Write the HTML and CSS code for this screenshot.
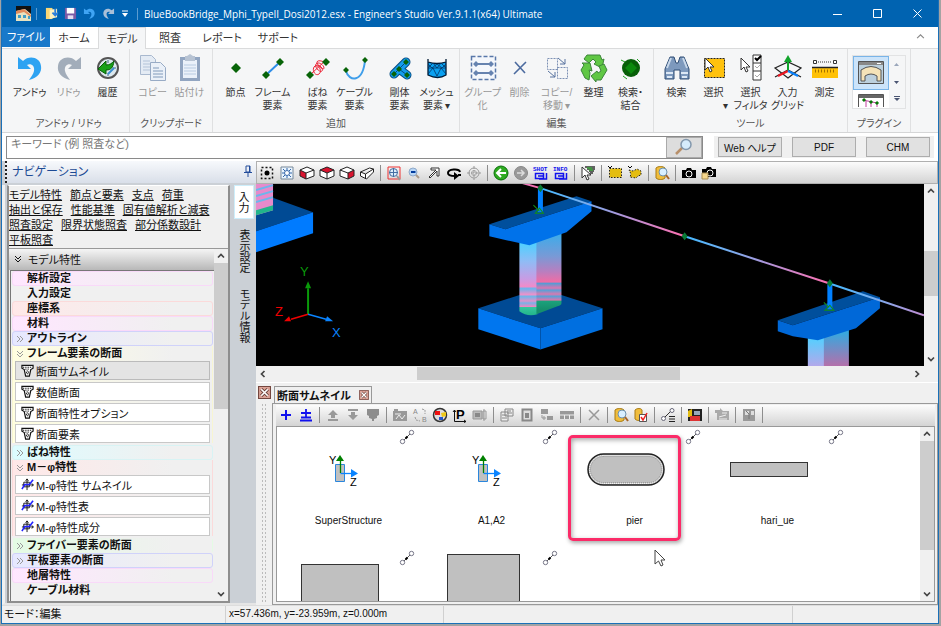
FILE: index.html
```
<!DOCTYPE html>
<html lang="ja">
<head>
    <meta charset="UTF-8">
    <meta name="viewport" content="width=device-width, initial-scale=1.0">
    <title>Engineer's Studio</title>
    <link rel="stylesheet" href="styles.css">
</head>
<body>
<!-- Shared icons -->
<svg class="sprite" aria-hidden="true">
    <symbol id="i-link" viewBox="0 0 16 16"><path d="M5 11l6-6" stroke="#555"/><path d="M6.500 9.500l2-2" stroke="#000" stroke-width="2"/><circle cx="3.500" cy="12.500" r="2.200" fill="#fff" stroke="#778"/><circle cx="12.500" cy="3.500" r="2.200" fill="#fff" stroke="#778"/></symbol>
    <symbol id="i-section" viewBox="0 0 14 14"><path d="M1 1.500h12v3l-2.500 1.500-1.500 7H5L3.500 6 1 4.500z" fill="#fff" stroke="#111" stroke-width="1.300"/><path d="M2 3.500h10M4.500 5.500h5M6 7.500h2v3H6z" stroke="#111" stroke-dasharray="1.500 1" fill="none"/></symbol>
    <symbol id="i-mphi" viewBox="0 0 14 14"><path d="M3 4.500h6v5H3zM1 7.500h12M6.500 1v12M5 3l1.500-2L8 3M11.500 6l2 1.500-2 1.500" stroke="#111" fill="none"/><path d="M1 12l3-5h5l4-5" stroke="#22f" stroke-width="1.700" fill="none"/></symbol>
    <symbol id="i-up" viewBox="0 0 8 8"><path d="M1 5.500l3-3 3 3" fill="none" stroke="#444" stroke-width="1.700"/></symbol>
    <symbol id="i-down" viewBox="0 0 8 8"><path d="M1 2.500l3 3 3-3" fill="none" stroke="#444" stroke-width="1.700"/></symbol>
    <symbol id="i-left" viewBox="0 0 8 8"><path d="M5.500 1l-3 3 3 3" fill="none" stroke="#444" stroke-width="1.700"/></symbol>
    <symbol id="i-right" viewBox="0 0 8 8"><path d="M2.500 1l3 3-3 3" fill="none" stroke="#444" stroke-width="1.700"/></symbol>
    <symbol id="i-more" viewBox="0 0 8 8"><path d="M1 1l3 3-3 3M4 1l3 3-3 3" fill="none" stroke="#999"/></symbol>
    <symbol id="i-open" viewBox="0 0 8 8"><path d="M1 1l3 3 3-3M1 4l3 3 3-3" fill="none" stroke="currentColor"/></symbol>
    <symbol id="i-undo" viewBox="0 0 28 28"><path d="M2 3v12h13l-4-4c4-2 8 1 7 6-.5 3-3 6-5 9 9-2 13-8 12-14C24 3 13 1 7 7z" fill="currentColor"/></symbol>
    <symbol id="i-x" viewBox="0 0 12 12"><path d="M.5.5h11v11H.5z" fill="#dca397" stroke="#74463e"/><path d="M3 3l6 6M9 3L3 9" stroke="#6b4038" stroke-width="3"/><path d="M3 3l6 6M9 3L3 9" stroke="#fff" stroke-width="1.500"/></symbol>
    <symbol id="i-axes" viewBox="0 0 32 36"><path d="M7.500 12.500h9v17h-9z" fill="#c0c0c0" stroke="#2a86dd"/><path d="M12.500 21.500h12" stroke="#0a84ff" stroke-width="1.300"/><path d="M23 17l7 4.500-7 4z" fill="#0a84ff"/><path d="M12.500 21V7" stroke="#008000" stroke-width="1.300"/><path d="M8 9l4-6 4 6z" fill="#008000"/></symbol>
    <symbol id="i-search" viewBox="0 0 16 16"><path d="M2 3c2-2 7-2 9 0v10c-2 2-7 2-9 0z" fill="#f0bd3c" stroke="#a87b12"/><circle cx="9" cy="7" r="4" fill="#d8efff" stroke="#6d91ad"/><path d="M12 10l3 4" stroke="#a6652a" stroke-width="2"/></symbol>
</svg>

<div class="window">
    <header class="titlebar">
        <svg class="app-icon" viewBox="0 0 15 15"><path d="M0 0h15v15H0z" fill="#e7e2c0"/><path d="M0 0h15v8L9 3 0 5z" fill="#111"/><path d="M0 5l8-2 7 6v2L8 6 0 8z" fill="#e18a5b"/><path d="M2 9h3v3H2zM7 9h3v3H7zM12 10h2v3h-2z" fill="#3f9dc5"/></svg>
        <i class="bar"></i>
        <button aria-label="開く"><svg viewBox="0 0 14 14"><path d="M1 1h7v12H1z" fill="#f9d675"/><path d="M5 3l8-1v9l-8 2z" fill="#fff3c0"/><path d="M11 2v7M8 6l3 3 3-3" stroke="#2b7fdb" stroke-width="2" fill="none"/></svg></button>
        <button aria-label="保存"><svg viewBox="0 0 14 14"><path d="M1 1h12v12H1z" fill="#7a5aa6"/><path d="M3 1h8v6H3z" fill="#fff"/><path d="M4 9h6v4H4z" fill="#e5dcf0"/></svg></button>
        <button class="undo" aria-label="元に戻す"><svg viewBox="0 0 28 28"><use href="#i-undo"/></svg></button>
        <button class="redo" aria-label="やり直し"><svg viewBox="0 0 28 28"><g transform="matrix(-1 0 0 1 28 0)"><use href="#i-undo"/></g></svg></button>
        <button class="small" aria-label="カスタマイズ"><svg viewBox="0 0 8 8"><path d="M1 1h6" stroke="#fff"/><path d="M1 3h6L4 7z" fill="#fff"/></svg></button>
        <i class="bar last-bar"></i>
        <h1>BlueBookBridge_Mphi_TypeII_Dosi2012.esx - Engineer's Studio Ver.9.1.1(x64) Ultimate</h1>
        <div class="window-buttons">
            <button aria-label="最小化"><svg viewBox="0 0 10 10"><path d="M0 5.500h9" stroke="#fff"/></svg></button>
            <button aria-label="最大化"><svg viewBox="0 0 10 10"><path d="M.5.5h8v8h-8z" fill="none" stroke="#fff"/></svg></button>
            <button aria-label="閉じる"><svg viewBox="0 0 10 10"><path d="M.5.5l8 8M8.500.5l-8 8" stroke="#fff"/></svg></button>
        </div>
    </header>

    <nav class="tabs">
        <button class="file">ファイル</button>
        <button>ホーム</button>
        <button class="active">モデル</button>
        <button>照査</button>
        <button class="wide">レポート</button>
        <button class="wide">サポート</button>
        <button class="collapse" aria-label="リボンを閉じる"><svg viewBox="0 0 8 8"><path d="M1 5.500l3-3 3 3" fill="none" stroke="#888"/></svg></button>
    </nav>

    <section class="ribbon">
        <div class="group roomy">
            <div class="tools">
                <button class="tool"><svg class="blue" viewBox="0 0 28 28"><use href="#i-undo"/></svg>アンドゥ</button>
                <button class="tool off"><svg class="gray" viewBox="0 0 28 28"><g transform="matrix(-1 0 0 1 28 0)"><use href="#i-undo"/></g></svg>リドゥ</button>
                <button class="tool"><svg viewBox="0 0 28 28"><circle cx="14" cy="14" r="10" fill="#dce8ee" stroke="#555" stroke-width="2"/><path d="M14 6v3M22 14h-3M14 22v-3M14 14l5-6" stroke="#468"/><path d="M4 15l8-8v4c4 0 6-2 8-4-1 7-3 9-8 9v4z" fill="#18a018" stroke="#075c07"/><path d="M14 20l6-6" stroke="#3a8dd0" stroke-width="2"/></svg>履歴</button>
            </div>
            <div class="caption">アンドゥ / リドゥ</div>
        </div>
        <div class="group">
            <div class="tools">
                <button class="tool off"><svg viewBox="0 0 28 28"><path d="M1.500 1.500h11l4 4v15h-15z" fill="#e4ebf4" stroke="#a9b9cf"/><path d="M4 7h7M4 10h9M4 13h9M4 16h9" stroke="#b3c3d8"/><path d="M11.500 8.500h10l5 5v13h-15z" fill="#eaf0f8" stroke="#98abc5"/><path d="M14 14h6M14 17h10M14 20h10M14 23h10" stroke="#a4b6ce" stroke-width="1.500"/></svg>コピー</button>
                <button class="tool off"><svg viewBox="0 0 28 28"><path d="M4 3h20v24H4z" fill="#91a5c1"/><path d="M7 6h14v18H7z" fill="#eaf1fa"/><path d="M9 2h2l3-2 3 2h2v5H9z" fill="#b7c3d3"/><path d="M8 11h12M8 14h12M8 17h12M8 20h12" stroke="#b8cbe2"/></svg>貼付け</button>
            </div>
            <div class="caption">クリップボード</div>
        </div>
        <div class="group">
            <div class="tools">
                <button class="tool"><svg viewBox="0 0 28 28"><path d="M14 9l5 5-5 5-5-5z" fill="#086408"/></svg>節点</button>
                <button class="tool"><svg viewBox="0 0 28 28"><path d="M7 21L21 8" stroke="#2e8de8" stroke-width="2"/><path d="M7 17l4 4-4 4-4-4zM21 4l4 4-4 4-4-4z" fill="#086408"/></svg>フレーム<br>要素</button>
                <button class="tool spaced"><svg viewBox="0 0 28 28"><path d="M7 20L21 7M10 13c4-4 9 4 5 7s-8-5-4-8 9 3 7 5-8-4-6-7 8 1 8 4-6-2-7-5 5-3 8 0" stroke="#ed2436" fill="none"/><path d="M6 17l4 4-4 4-4-4zM22 4l4 4-4 4-4-4z" fill="#086408"/></svg>ばね<br>要素</button>
                <button class="tool"><svg viewBox="0 0 28 28"><path d="M5 17c3 11 17 12 19-11" stroke="#3f9eea" stroke-width="2" fill="none"/><path d="M5 13l3 3-3 3-3-3zM24 3l3 3-3 3-3-3z" fill="#086408"/></svg>ケーブル<br>要素</button>
                <button class="tool spaced"><svg viewBox="0 0 28 28"><g stroke-linecap="round"><path d="M8 20L20 8M13 15l8 6" stroke="#064b80" stroke-width="9"/><path d="M8 20L20 8M13 15l8 6" stroke="#149ceb" stroke-width="7"/></g><path d="M8 20L20 8M13 15l8 6" stroke="#064b80"/><path d="M8 17l3 3-3 3-3-3zM20 5l3 3-3 3-3-3zM21 18l3 3-3 3-3-3zM13 12l3 3-3 3-3-3z" fill="#086408"/></svg>剛体<br>要素</button>
                <button class="tool"><svg viewBox="0 0 28 28"><path d="M5 5v16q10 5 18 0V5v3q-9 3-18 0z" fill="#0aa0f0" stroke="#001a35" stroke-width="1.300"/><path d="M5 14l5-5 4 5 4-5 5 5M5 20l5-6 4 8 4-8 5 6M5 14h18M5 10l4 4 5-4 5 4 4-4" stroke="#036" stroke-width=".8" fill="none"/></svg>メッシュ<br>要素<span class="drop">▾</span></button>
            </div>
            <div class="caption">追加</div>
        </div>
        <div class="group">
            <div class="tools">
                <button class="tool off"><svg viewBox="0 0 28 28"><path d="M2.500 2.500h24v23h-24z" fill="#f4f7fc" stroke="#5877a9" stroke-width="1.500" stroke-dasharray="4 2"/><path d="M6 10h17M6 19h17" stroke="#6683b0" stroke-width="2"/><path d="M7 7l3 3-3 3-3-3zM22 7l3 3-3 3-3-3zM7 16l3 3-3 3-3-3zM22 16l3 3-3 3-3-3z" fill="#6683b0"/></svg>グループ<br>化</button>
                <button class="tool off"><svg viewBox="0 0 28 28"><path d="M9 8l10 11M20 8L8 20" stroke="#4c6b9f" stroke-width="1.600"/></svg>削除</button>
                <button class="tool off"><svg viewBox="0 0 28 28"><path d="M4.500 4.500h10v11h-10zM14.500 13.500h10v11h-10z" fill="none" stroke="#7c91b4" stroke-dasharray="2 1"/><path d="M15 4l7 6M5 17l7 6M22 5v5h-5M12 18v5H7" stroke="#58739f" fill="none"/></svg>コピー/<br>移動<span class="drop">▾</span></button>
                <button class="tool"><svg viewBox="0 0 28 28"><g fill="#60c744" stroke="#3c853a"><path d="M7 1h13l2 5 2-1-2 9-8-4 2-2-3-3-4 4-5-4z"/><path d="M24 10l3 6-6 10h-5v2l-5-6 6-5 1 2 3-2-2-5z"/><path d="M2 9l8 0 2 8-3-1 1 3-1 7-4-2-4-8 3-5z"/></g></svg>整理</button>
                <button class="tool"><svg viewBox="0 0 28 28"><circle cx="14" cy="14" r="9" fill="#075f08"/><path d="M14 8l6 6-6 6-6-6z" fill="#0b8a0d"/><path d="M4 6l4 2M6 22l4 3M20 5l3 3" stroke="#1da21d"/></svg>検索・<br>結合</button>
            </div>
            <div class="caption">編集</div>
        </div>
        <div class="group">
            <div class="tools">
                <button class="tool"><svg viewBox="0 0 28 28"><path d="M7 3h4l2 6h2l2-6h4l5 12v10h-9v-9h-6v9H2V15z" fill="#7d99bd" stroke="#2e4d75"/><path d="M3 19h7M18 19h7M4 23h5M19 23h5" stroke="#dce8f5" stroke-width="2"/><path d="M8 4l-4 10M20 4l4 10" stroke="#c8d8ea" stroke-width="2"/></svg>検索</button>
                <button class="tool"><svg viewBox="0 0 28 28"><path d="M4.500 4.500h20v19h-20z" fill="#ffc20e" stroke="#222" stroke-dasharray="2 1"/><path d="M5 4v12l3-3 2 5 2-1-2-4h4z" fill="#fff" stroke="#333"/></svg>選択<br><span class="drop right">▾</span></button>
                <button class="tool"><svg viewBox="0 0 28 28"><path d="M4 4v12l3-3 2 5 2-1-2-4h4z" fill="#fff" stroke="#333"/><path d="M16 1h8v25h-8zM16 9h8M16 17h8" fill="#fff" stroke="#333"/><path d="M18 4l2 2 4-4" fill="none" stroke="#000" stroke-width="2"/><path d="M18 12l2 2 3-3M18 21l2 2 3-3" fill="none" stroke="#aaa"/></svg>選択<br>フィルタ</button>
                <button class="tool"><svg viewBox="0 0 28 28"><path d="M1 14l13-6 13 6-13 10zM1 23l13-7 13 7" fill="none" stroke="#222" stroke-width="1.200"/><path d="M14 17V5" stroke="#11a42b" stroke-width="2"/><path d="M10 8l4-7 4 7z" fill="#11a42b"/><path d="M14 17L4 22" stroke="#f01622" stroke-width="2"/><path d="M14 17l10 5" stroke="#0a84ff" stroke-width="2"/></svg>入力<br>グリッド</button>
                <button class="tool"><svg viewBox="0 0 28 28"><path d="M2.500 6.500h3v3h-3zM22.500 6.500h3v3h-3z" fill="#fff" stroke="#333"/><path d="M7 8h14" stroke="#333" stroke-dasharray="1 1"/><path d="M1 14h26v10H1z" fill="#ffc107"/><path d="M1 13.500h26" stroke="#222" stroke-width="1.500"/><path d="M4 17h20" stroke="#a37100" stroke-width="3" stroke-dasharray="1 2"/></svg>測定</button>
            </div>
            <div class="caption">ツール</div>
        </div>
        <div class="group">
            <div class="gallery">
                <div class="gallery-list">
                    <button class="picked" aria-label="プラグイン 1"><svg viewBox="0 0 28 28"><path d="M1.500 2.500h25v22h-25z" fill="#bcd0dd" stroke="#555"/><path d="M2 3h24v3H2z" fill="#888"/><path d="M20 4.500h4" stroke="#fff"/><path d="M4 11q10-7 20 0v11h-4v-5q-6-4-12 0v5H4z" fill="#f5e3b8" stroke="#555"/></svg></button>
                    <button aria-label="プラグイン 2"><svg viewBox="0 0 28 14"><path d="M1.500 1.500h25v14h-25z" fill="#fff" stroke="#555"/><path d="M2 2h24v3H2z" fill="#666"/><path d="M6 7l14 3v4M9 8v6M14 9v5" stroke="#c03e9e" fill="none"/><path d="M6 6l2 2M13 8l2 2M19 9l2 2" stroke="#087808" stroke-width="3"/></svg></button>
                </div>
                <div class="gallery-nav">
                    <button aria-label="上"><svg viewBox="0 0 6 6"><path d="M0 4h5L2.500 1z" fill="#9aa7bb"/></svg></button>
                    <button aria-label="下"><svg viewBox="0 0 6 6"><path d="M0 2h5L2.500 5z" fill="#4a5572"/></svg></button>
                    <button aria-label="一覧"><svg viewBox="0 0 6 6"><path d="M0 .5h6" stroke="#4a5572"/><path d="M0 2h6L3 5z" fill="#4a5572"/></svg></button>
                </div>
            </div>
            <div class="caption">プラグイン</div>
        </div>
    </section>

    <form class="searchbar">
        <div class="search-box">
            <input type="text" aria-label="キーワード" placeholder="キーワード (例 照査など)">
            <button type="button" aria-label="検索"><svg viewBox="0 0 20 18"><path d="M2 16l7-7" stroke="#b8906b" stroke-width="2.500"/><circle cx="12" cy="6.500" r="5" fill="#d5ebfb" stroke="#8398ad" stroke-width="1.500"/></svg></button>
        </div>
        <div class="help">
            <button type="button">Web ヘルプ</button>
            <button type="button">PDF</button>
            <button type="button">CHM</button>
        </div>
    </form>

    <main class="main">
        <aside class="side">
            <div class="side-title"><span>ナビゲーション</span><button aria-label="固定"><svg viewBox="0 0 10 12"><path d="M3 1h4v6H3zM1 7.500h8M5 8v4" fill="none" stroke="#224c9b"/><path d="M6.500 1v6" stroke="#224c9b"/></svg></button></div>
            <div class="side-body">
                <div class="nav-panel">
                    <div class="links">
                        <p><a href="#">モデル特性</a><a href="#">節点と要素</a><a href="#">支点</a><a href="#">荷重</a></p>
                        <p><a href="#">抽出と保存</a><a href="#">性能基準</a><a href="#">固有値解析と減衰</a></p>
                        <p><a href="#">照査設定</a><a href="#">限界状態照査</a><a href="#">部分係数設計</a></p>
                        <p><a href="#">平板照査</a></p>
                    </div>
                    <div class="tree">
                        <div class="tree-main">
                            <button class="tree-head"><svg viewBox="0 0 8 8"><use href="#i-open"/></svg>モデル特性</button>
                            <div class="tree-list">
                                <button class="row pink">解析設定</button>
                                <button class="row plain">入力設定</button>
                                <button class="row red">座標系</button>
                                <button class="row pink">材料</button>
                                <button class="row blue"><svg viewBox="0 0 8 8"><use href="#i-more"/></svg>アウトライン</button>
                                <div class="branch yellow">
                                    <button class="row"><svg viewBox="0 0 8 8"><use href="#i-open"/></svg>フレーム要素の断面</button>
                                    <button class="leaf current"><svg viewBox="0 0 14 14"><use href="#i-section"/></svg>断面サムネイル</button>
                                    <button class="leaf"><svg viewBox="0 0 14 14"><use href="#i-section"/></svg>数値断面</button>
                                    <button class="leaf"><svg viewBox="0 0 14 14"><use href="#i-section"/></svg>断面特性オプション</button>
                                    <button class="leaf"><svg viewBox="0 0 14 14"><use href="#i-section"/></svg>断面要素</button>
                                </div>
                                <button class="row cyan"><svg viewBox="0 0 8 8"><use href="#i-more"/></svg>ばね特性</button>
                                <div class="branch red">
                                    <button class="row"><svg viewBox="0 0 8 8"><use href="#i-open"/></svg>M－φ特性</button>
                                    <button class="leaf"><svg viewBox="0 0 14 14"><use href="#i-mphi"/></svg>M-φ特性 サムネイル</button>
                                    <button class="leaf"><svg viewBox="0 0 14 14"><use href="#i-mphi"/></svg>M-φ特性表</button>
                                    <button class="leaf"><svg viewBox="0 0 14 14"><use href="#i-mphi"/></svg>M-φ特性成分</button>
                                </div>
                                <button class="row green"><svg viewBox="0 0 8 8"><use href="#i-more"/></svg>ファイバー要素の断面</button>
                                <button class="row blue"><svg viewBox="0 0 8 8"><use href="#i-more"/></svg>平板要素の断面</button>
                                <button class="row pink">地層特性</button>
                                <button class="row plain">ケーブル材料</button>
                            </div>
                        </div>
                        <div class="vscroll nav-scroll">
                            <button aria-label="上へ"><svg viewBox="0 0 8 8"><use href="#i-up"/></svg></button>
                            <div class="track"><div class="thumb"></div></div>
                            <button aria-label="下へ"><svg viewBox="0 0 8 8"><use href="#i-down"/></svg></button>
                        </div>
                    </div>
                </div>
                <div class="side-tabs">
                    <button class="active">入力</button>
                    <button>表示設定</button>
                    <button>モデル情報</button>
                </div>
            </div>
        </aside>

        <section class="work">
            <div class="toolbar">
                <button aria-label="全体"><svg viewBox="0 0 16 16"><path d="M2.500 2.500h11v11h-11z" fill="none" stroke="#111" stroke-width="1.500" stroke-dasharray="2 2"/><circle cx="8" cy="8" r="2.500"/></svg></button>
                <button aria-label="枠"><svg viewBox="0 0 16 16"><path d="M2 2h12v12H2z" fill="#eaf5ff" stroke="#789" /><path d="M4 4l2 2M12 4l-2 2M4 12l2-2M12 12l-2-2M8 3v2M8 11v2M3 8h2M11 8h2" stroke="#36a"/><circle cx="8" cy="8" r="2.500" fill="#fff" stroke="#36a"/></svg></button>
                <button aria-label="正面"><svg viewBox="0 0 16 16"><path d="M1 5l7-3 7 3v6l-8 3-6-3z" fill="#fff"/><path d="M1 5l6 3v6l-6-3z" fill="#d9142f"/><path d="M1 5l7-3 7 3-8 3zM1 5v6l6 3V8M15 5v6l-8 3" fill="none" stroke="#222"/></svg></button>
                <button aria-label="上面"><svg viewBox="0 0 16 16"><path d="M1 5l7-3 7 3v6l-7 3-7-3z" fill="#fff"/><path d="M1 5l7-3 7 3-7 3z" fill="#d9142f"/><path d="M1 5l7-3 7 3-7 3zM1 5v6l7 3V8M15 5v6l-7 3" fill="none" stroke="#222"/></svg></button>
                <button aria-label="側面"><svg viewBox="0 0 16 16"><path d="M1 5l7-3 7 3v6l-6 3-8-3z" fill="#fff"/><path d="M9 8l6-3v6l-6 3z" fill="#d9142f"/><path d="M1 5l7-3 7 3-6 3zM1 5v6l8 3V8M15 5v6l-6 3" fill="none" stroke="#222"/></svg></button>
                <button aria-label="鳥瞰"><svg viewBox="0 0 16 16"><path d="M1.500 7l9-4 4 1v3l-7 7-6-3zM1.500 7l5 2 8-5M6.500 9v5" fill="#fff" stroke="#222"/></svg></button>
                <i></i>
                <button aria-label="窓拡大"><svg viewBox="0 0 16 16"><path d="M2 2h12v12H2z" fill="none" stroke="#ed3333"/><circle cx="7.500" cy="7.500" r="4" fill="#dceefa" stroke="#446fa3"/><path d="M7.500 3v9M3 7.500h9" stroke="#446fa3"/><path d="M11 11l3 4" stroke="#999" stroke-width="2"/></svg></button>
                <button aria-label="縮小"><svg viewBox="0 0 16 16"><circle cx="7" cy="7" r="4" fill="#b9d6f5" stroke="#8fa9c9"/><path d="M5 7h4.500" stroke="#003b9e" stroke-width="2"/><path d="M10 10l3 3" stroke="#a99a8a" stroke-width="2"/></svg></button>
                <button aria-label="移動"><svg viewBox="0 0 16 16"><path d="M3 12l7-7H5V3h8v8h-2V6l-7 7z" fill="#fff" stroke="#333"/></svg></button>
                <button aria-label="回転"><svg viewBox="0 0 16 16"><path d="M14 7C13 3 2 4 2 8c0 3 4 3 7 3" fill="none" stroke="#000" stroke-width="2"/><path d="M8 7l5 4-5 4zM12 9h3v2h-3z"/></svg></button>
                <button aria-label="中心"><svg viewBox="0 0 16 16"><circle cx="8" cy="8" r="5" fill="none" stroke="#999"/><circle cx="8" cy="8" r="2.500" fill="none" stroke="#aaa"/><path d="M8 1v14M1 8h14" stroke="#999" stroke-dasharray="3 1"/></svg></button>
                <i></i>
                <button aria-label="戻る"><svg viewBox="0 0 16 16"><circle cx="8" cy="8" r="7" fill="#2eaa20" stroke="#087008"/><path d="M13 8H5M8 4L4 8l4 4" fill="none" stroke="#fff" stroke-width="2"/></svg></button>
                <button aria-label="進む"><svg viewBox="0 0 16 16"><circle cx="8" cy="8" r="6.500" fill="#999" stroke="#888"/><path d="M4 8h7M8 5l3 3-3 3" fill="none" stroke="#ddd" stroke-width="1.500"/></svg></button>
                <button class="word" aria-label="SHOT"><svg viewBox="0 0 16 16"><text x="0" y="6">SHOT</text><path d="M2.500 8.500h8v5h-8zM5 11h6M13.500 8v6H6" fill="none" stroke="#11e" stroke-width="1.500"/></svg></button>
                <button class="word" aria-label="INFO"><svg viewBox="0 0 16 16"><text x="0" y="6">INFO</text><path d="M2.500 8.500h8v5h-8zM5 11h6M13.500 8v6H6" fill="none" stroke="#11e" stroke-width="1.500"/></svg></button>
                <i></i>
                <button aria-label="選択"><svg viewBox="0 0 16 16"><path d="M5 2h10M7 4h8M9 6h5M10 8h3" stroke="#333" stroke-width="1.300"/><path d="M7 3h5M9 5h4" stroke="#27c427"/><path d="M2 2v11l3-3 2 5 2-1-2-4h4z" fill="#fff" stroke="#333"/></svg></button>
                <i></i>
                <button aria-label="矩形"><svg viewBox="0 0 16 16"><path d="M2.500 3.500h12v9h-12z" fill="#e4bd11" stroke="#222" stroke-dasharray="1.500 1.500"/><path d="M1 1l2 2 2-2" stroke="#000" fill="none"/></svg></button>
                <button aria-label="投げ縄"><svg viewBox="0 0 16 16"><path d="M2 5l4 1 4-2 4 2v4l-3 1-2 2-6-1 1-3z" fill="#e4bd11" stroke="#222" stroke-dasharray="1.500 1.500"/><path d="M1 1l2 2 2-2" stroke="#000" fill="none"/></svg></button>
                <i></i>
                <button aria-label="検索"><svg viewBox="0 0 16 16"><use href="#i-search"/></svg></button>
                <i></i>
                <button aria-label="撮影"><svg viewBox="0 0 16 16"><path d="M1 5h4l1-2h4l1 2h4v8H1z"/><circle cx="8" cy="9" r="3" fill="none" stroke="#fff"/></svg></button>
                <button aria-label="撮影コピー"><svg viewBox="0 0 16 16"><path d="M1 4h4l1-2h4l1 2h4v8H1z"/><circle cx="9" cy="8" r="3" fill="none" stroke="#fff"/><path d="M1 8h6v6H1z" fill="#f4d58b" stroke="#a98e55"/></svg></button>
            </div>

            <div class="view">
                <div class="view-row">
                    <svg class="scene" viewBox="0 0 667 183" preserveAspectRatio="xMidYMid slice">
                        <defs>
                            <linearGradient id="colL" x1="0" y1="60" x2="0" y2="132" gradientUnits="userSpaceOnUse"><stop offset="0" stop-color="#4fd0ff"/><stop offset=".25" stop-color="#8fbcf5"/><stop offset=".5" stop-color="#c99be3"/><stop offset=".6" stop-color="#f08bc9"/><stop offset=".63" stop-color="#68b5ed"/><stop offset=".71" stop-color="#ed91ca"/><stop offset=".74" stop-color="#70b6e8"/><stop offset=".8" stop-color="#df92cb"/><stop offset=".83" stop-color="#78b2e8"/><stop offset=".88" stop-color="#ef87c0"/><stop offset=".89" stop-color="#35c69d"/><stop offset="1" stop-color="#22b58a"/></linearGradient>
                            <linearGradient id="colR" x1="0" y1="50" x2="0" y2="126" gradientUnits="userSpaceOnUse"><stop offset="0" stop-color="#3aaceb"/><stop offset=".3" stop-color="#789ad6"/><stop offset=".5" stop-color="#b77fc0"/><stop offset=".64" stop-color="#f06da5"/><stop offset=".66" stop-color="#579bd4"/><stop offset=".72" stop-color="#da75b0"/><stop offset=".75" stop-color="#5aa0d6"/><stop offset=".8" stop-color="#d979b0"/><stop offset=".83" stop-color="#5aa0d6"/><stop offset=".88" stop-color="#e274aa"/><stop offset=".89" stop-color="#1ba27c"/><stop offset="1" stop-color="#158f6c"/></linearGradient>
                            <linearGradient id="girder" x1="284" y1="5" x2="428" y2="53" gradientUnits="userSpaceOnUse" spreadMethod="repeat"><stop offset="0" stop-color="#44b8ff"/><stop offset=".3" stop-color="#75aef0"/><stop offset=".6" stop-color="#b592d6"/><stop offset="1" stop-color="#ff6fb0"/></linearGradient>
                            <linearGradient id="endCol" x1="0" y1="150" x2="0" y2="183" gradientUnits="userSpaceOnUse"><stop offset="0" stop-color="#38a7de"/><stop offset="1" stop-color="#b66faa"/></linearGradient>
                            <linearGradient id="endColL" x1="0" y1="155" x2="0" y2="183" gradientUnits="userSpaceOnUse"><stop offset="0" stop-color="#55cfff"/><stop offset="1" stop-color="#b4a8ea"/></linearGradient>
                        </defs>
                        <!-- left pier -->
                        <path d="M0 12h10l47 17L0 48z" fill="#004a94"/>
                        <path d="M0 48l57-19v21L0 69z" fill="#007bff"/>
                        <path d="M0 0h17v27L0 32z" fill="#e78acb"/>
                        <path d="M0 7l17-5M0 13l17-5M0 19l17-5" stroke="#6cb6ec" stroke-width="2"/>
                        <path d="M0 27l17-5v5L0 32z" fill="#21b58b"/>
                        <!-- axes -->
                        <path d="M52 131v-26" stroke="#0a9a0a" stroke-width="2"/><path d="M49 105l3-7 3 7z" fill="#0a9a0a"/>
                        <path d="M52 131l-17 5" stroke="#f00000" stroke-width="1.500"/><path d="M28 138l5-5 2 5z" fill="#f00000"/>
                        <path d="M52 131l18 5" stroke="#0a84ff" stroke-width="1.500"/><path d="M77 138l-6-5-2 5z" fill="#0a84ff"/>
                        <text x="44" y="93" fill="#0a9a0a">Y</text><text x="19" y="133" fill="#f00000">Z</text><text x="76" y="154" fill="#0a84ff">X</text>
                        <!-- middle pier -->
                        <path d="M222 125l62-20 62 20-62 20z" fill="#004a94"/>
                        <path d="M222 125l62 20v21l-62-20z" fill="#0076ef"/><path d="M284 145l62-20v21l-62 20z" fill="#006fe0"/>
                        <path d="M263 58h18v73q-10 3-18-3z" fill="url(#colL)"/><path d="M280 50h25v70q0 2-4 3l-21 8z" fill="url(#colR)"/>
                        <path d="M233 41l87-28 15 5-86 28z" fill="#004f9c"/>
                        <path d="M233 41l16 5 86-28v10l-25 21-37 13-23-5-17-4z" fill="#0072ea"/>
                        <path d="M284 5v24" stroke="#0080ff" stroke-width="5"/>
                        <!-- right pier -->
                        <path d="M551 150h17v33h-17z" fill="url(#endColL)"/><path d="M567 145h25v38h-25z" fill="url(#endCol)"/>
                        <path d="M521 137l85-29 17 6-87 28z" fill="#004f9c"/>
                        <path d="M521 137l15 5 87-28v11l-24 20-38 12-25-4-15-5z" fill="#0068d8"/>
                        <path d="M573 101v25" stroke="#0080ff" stroke-width="5"/>
                        <!-- girder -->
                        <path d="M266 0l18 5 144 48 144 47 95 32" fill="none" stroke="url(#girder)" stroke-width="2"/>
                        <g fill="#087a35"><path d="M284 1l3 4-3 4-3-4zM428 49l3 4-3 4-3-4zM573 96l3 4-3 4-3-4z"/></g>
                        <g fill="none" stroke="#159015"><path d="M277 22l6 6M279 30l4-5 4 5zM567 119l5 5M568 127l5-5 4 5z"/></g>
                    </svg>
                    <div class="vscroll view-scroll">
                        <button aria-label="上へ"><svg viewBox="0 0 8 8"><use href="#i-up"/></svg></button>
                        <div class="track"><div class="thumb"></div></div>
                        <button aria-label="下へ"><svg viewBox="0 0 8 8"><use href="#i-down"/></svg></button>
                    </div>
                </div>
                <div class="hscroll">
                    <button aria-label="左へ"><svg viewBox="0 0 8 8"><use href="#i-left"/></svg></button>
                    <div class="track"><div class="thumb"></div></div>
                    <button aria-label="右へ"><svg viewBox="0 0 8 8"><use href="#i-right"/></svg></button>
                </div>
            </div>

            <div class="dock">
                <div class="grip"><button aria-label="閉じる"><svg viewBox="0 0 12 12"><use href="#i-x"/></svg></button><div class="dots"></div></div>
                <div class="dock-body">
                    <div class="dock-tabs"><div class="dock-tab">断面サムネイル<button aria-label="タブを閉じる"><svg viewBox="0 0 12 12"><use href="#i-x"/></svg></button></div></div>
                    <div class="dock-frame">
                        <div class="toolbar">
                            <button aria-label="追加"><svg viewBox="0 0 16 16"><path d="M8 3v10M3 8h10" stroke="#11e" stroke-width="2"/></svg></button>
                            <button aria-label="挿入"><svg viewBox="0 0 16 16"><path d="M8 2v8M3 6h10M3 10.500h10M2 13.500h12" stroke="#11e" stroke-width="1.800"/></svg></button>
                            <i></i>
                            <button aria-label="上へ"><svg viewBox="0 0 16 16"><path d="M8 3l5 5h-3v3H6V8H3zM3 12h10v2H3z" fill="#999"/></svg></button>
                            <button aria-label="下へ"><svg viewBox="0 0 16 16"><path d="M3 2h10v2H3zM6 5h4v3h3l-5 5-5-5h3z" fill="#999"/></svg></button>
                            <button aria-label="断面"><svg viewBox="0 0 16 16"><path d="M2 2h12v6l-2 1v2l-3 1v2H7v-2l-3-1V9L2 8z" fill="#8d8d8d"/></svg></button>
                            <i></i>
                            <button aria-label="画像"><svg viewBox="0 0 16 16"><path d="M1 4h14v10H1zM2 2h4v2H2z" fill="#999"/><path d="M3 7h6M4 12l3-4 3 4 3-4" stroke="#eee" fill="none"/></svg></button>
                            <button class="ab" aria-label="名称変更"><svg viewBox="0 0 16 16"><text x="1" y="7">A</text><text x="10" y="15">B</text><path d="M10 2l3 1v4M3 10l1 3 4 1" fill="none" stroke="#999" stroke-dasharray="2 1"/></svg></button>
                            <button aria-label="色"><svg viewBox="0 0 16 16"><circle cx="8" cy="8" r="6.500" fill="#ddd" stroke="#333" stroke-width="1.500"/><path d="M3 4h5v4H3z" fill="#e11"/><path d="M9 6l5-1v4l-4 1z" fill="#edc81a"/><path d="M7 10h4v3H7z" fill="#25c"/></svg></button>
                            <button class="pp" aria-label="P"><svg viewBox="0 0 16 16"><text x="4" y="12">P</text><path d="M2.500 3v11.500H14M1 5l1.500-2L4 5M12 13l2 1.500-2 1" fill="none" stroke="#111"/></svg></button>
                            <button aria-label="複製"><svg viewBox="0 0 16 16"><path d="M1 4h9v8H1z" fill="#bbb" stroke="#999"/><path d="M3 6h5v4H3z" fill="#888"/><path d="M12 2v12M14 4v8h-3V4z" stroke="#999" fill="none"/></svg></button>
                            <i></i>
                            <button aria-label="コピー"><svg viewBox="0 0 16 16"><path d="M2 5h7v9H2zM6 2h8v7H6z" fill="#eee" stroke="#888"/><path d="M3 8h5M3 11h5M8 4h4M8 6h5" stroke="#888"/></svg></button>
                            <button aria-label="貼付け"><svg viewBox="0 0 16 16"><path d="M3.500 2.500h9v11h-9z" fill="#ddd" stroke="#888" stroke-width="2"/><path d="M6 6h4v5H6z" fill="#888"/></svg></button>
                            <button aria-label="取込"><svg viewBox="0 0 16 16"><path d="M2 2h7v5H2zM8 9h6v4H8z" fill="#999"/><path d="M3 8v3h4M5 9v4" stroke="#999" fill="none"/></svg></button>
                            <button aria-label="表"><svg viewBox="0 0 16 16"><path d="M1 4h14v8H1z" fill="#999"/><path d="M1 8h14M5.500 8v4M10.500 8v4" stroke="#eee"/></svg></button>
                            <i></i>
                            <button aria-label="削除"><svg viewBox="0 0 16 16"><path d="M3 3l10 10M13 3L3 13" stroke="#999" stroke-width="1.500"/></svg></button>
                            <i></i>
                            <button aria-label="検索"><svg viewBox="0 0 16 16"><use href="#i-search"/></svg></button>
                            <button aria-label="確認"><svg viewBox="0 0 16 16"><path d="M2 3c2-2 6-2 7 0v9c-1 2-5 2-7 0z" fill="#f0bd3c" stroke="#a87b12"/><path d="M6.500 7.500h7v7h-7z" fill="#fff" stroke="#555"/><path d="M8 10l2 3 4-7" stroke="#e22" stroke-width="1.500" fill="none"/></svg></button>
                            <i></i>
                            <button aria-label="参照"><svg viewBox="0 0 16 16"><path d="M5 10l6-6" stroke="#333"/><circle cx="3.500" cy="11.500" r="2" fill="#fff" stroke="#667"/><circle cx="12" cy="3.500" r="2" fill="#fff" stroke="#667"/><path d="M9 9.500h6M9 12h6M9 14.500h6" stroke="#222"/></svg></button>
                            <i></i>
                            <button aria-label="読込"><svg viewBox="0 0 16 16"><path d="M1 2h14v12H1z" fill="#222"/><path d="M1 4l4-2v8H1z" fill="#e4bd11"/><path d="M7 4h6v4H7z" fill="#9ab"/><path d="M3 9h10v5H3z" fill="#d33"/></svg></button>
                            <i></i>
                            <button aria-label="書出"><svg viewBox="0 0 16 16"><path d="M1 3h5V1l3 3h6v9H3V6H1z" fill="#aaa"/><path d="M8 6h5M5 10l7-2M5 12h8" stroke="#eee"/></svg></button>
                            <i></i>
                            <button aria-label="表示"><svg viewBox="0 0 16 16"><path d="M2 2h12v12H2z" fill="#999"/><path d="M4 4h4v4H4zM10 4h3v4h-3z" fill="#ddd"/><path d="M5 4l3 3v5" stroke="#777" fill="none"/></svg></button>
                            <i></i>
                        </div>
                        <div class="thumbs-row">
                            <div class="thumbs">
                                <div class="cell"><div class="shape axes"><svg viewBox="0 0 32 36"><use href="#i-axes"/><text x="1" y="12">Y</text><text x="22" y="34">Z</text></svg></div><svg class="link" viewBox="0 0 16 16"><use href="#i-link"/></svg><span>SuperStructure</span></div>
                                <div class="cell"><div class="shape axes"><svg viewBox="0 0 32 36"><use href="#i-axes"/><text x="1" y="12">Y</text><text x="22" y="34">Z</text></svg></div><svg class="link" viewBox="0 0 16 16"><use href="#i-link"/></svg><span>A1,A2</span></div>
                                <div class="cell">
                                    <div class="shape pier"><svg viewBox="0 0 78 33"><rect x="1" y="1" width="76" height="31" rx="15.500" fill="#c0c0c0" stroke="#222" stroke-width="1.500"/><rect x="2.500" y="2.500" width="73" height="28" rx="14" fill="none" stroke="#fff" stroke-dasharray="1 1"/><rect x="3.500" y="3.500" width="71" height="26" rx="13" fill="none" stroke="#777" stroke-width=".5" stroke-dasharray="1 1"/></svg></div>
                                    <svg class="link" viewBox="0 0 16 16"><use href="#i-link"/></svg><span>pier</span>
                                    <div class="marker"></div>
                                    <svg class="cursor" viewBox="0 0 12 18"><path d="M1 1v14l3.500-3 2.500 5 2-1-2-5h4z" fill="#fff" stroke="#444"/></svg>
                                </div>
                                <div class="cell"><div class="shape"><div class="box flat"></div></div><svg class="link" viewBox="0 0 16 16"><use href="#i-link"/></svg><span>hari_ue</span></div>
                                <div class="cell"><div class="shape"><div class="box"></div></div><svg class="link" viewBox="0 0 16 16"><use href="#i-link"/></svg></div>
                                <div class="cell"><div class="shape"><div class="box tall"></div></div><svg class="link" viewBox="0 0 16 16"><use href="#i-link"/></svg></div>
                            </div>
                            <div class="vscroll thumb-scroll">
                                <button aria-label="上へ"><svg viewBox="0 0 8 8"><use href="#i-up"/></svg></button>
                                <div class="track"><div class="thumb"></div></div>
                                <button aria-label="下へ"><svg viewBox="0 0 8 8"><use href="#i-down"/></svg></button>
                            </div>
                        </div>
                    </div>
                </div>
            </div>
        </section>
    </main>

    <footer class="status">
        <span class="mode">モード：編集</span>
        <span class="coords">x=57.436m, y=-23.959m, z=0.000m</span>
        <span class="blank"></span>
        <span class="last"></span>
    </footer>
</div>
</body>
</html>
```
FILE: styles.css
```
* {
    box-sizing: border-box;
}
body {
    margin: 0;
    height: 100vh;
    padding: 0 2px 2px 1px;
    background: #a3a3a3;
    color: #111;
    font-family: "Liberation Sans", "Noto Sans CJK JP", sans-serif;
    font-size: 11px;
    font-feature-settings: "palt";
    overflow: hidden;
}
button {
    margin: 0;
    padding: 0;
    border: none;
    background: none;
    color: inherit;
    font: inherit;
    font-feature-settings: inherit;
}
svg {
    display: block;
    flex: none;
}
.sprite {
    position: absolute;
    width: 0;
    height: 0;
}
.window {
    display: flex;
    flex-direction: column;
    height: 100%;
    border: 1px solid #1a70b8;
    border-top: none;
    background: #f0f0f0;
}

/* Title bar */
.titlebar {
    display: flex;
    align-items: center;
    flex: none;
    height: 27px;
    padding-left: 14px;
    background: #0063b1;
    color: #fff;
}
.app-icon {
    width: 15px;
    height: 15px;
}
.titlebar .bar {
    width: 1px;
    height: 12px;
    margin: 0 5px;
    background: #5b9bd0;
}
.titlebar .last-bar {
    margin: 0 3px 0 0;
}
.titlebar > button {
    width: 19px;
    padding-left: 3px;
}
.titlebar > button svg {
    width: 13px;
    height: 13px;
}
.titlebar > .small svg {
    width: 8px;
    height: 8px;
}
.titlebar > .undo {
    color: #3fa4f4;
}
.titlebar > .redo {
    color: #a9bfd8;
}
.titlebar h1 {
    flex: 1;
    margin: 0 0 0 3px;
    font: 10px "Open Sans", sans-serif;
    white-space: nowrap;
}
.window-buttons {
    display: flex;
}
.window-buttons button {
    display: flex;
    justify-content: center;
    width: 40px;
}
.window-buttons svg {
    width: 10px;
    height: 10px;
}

/* Ribbon tabs */
.tabs {
    display: flex;
    flex: none;
    height: 22px;
    background: #fff;
    border-bottom: 1px solid #dadbdc;
}
.tabs button {
    width: 48px;
    height: 21px;
    padding-bottom: 2px;
    color: #333;
}
.tabs .file {
    height: 20px;
    background: #1979ca;
    color: #fff;
}
.tabs .active {
    height: 22px;
    border: 1px solid #dadbdc;
    border-bottom: none;
    background: #f5f6f7;
}
.tabs .wide {
    width: 56px;
}
.tabs .collapse {
    width: 22px;
    margin-left: auto;
}
.collapse svg {
    width: 9px;
    height: 9px;
}

/* Ribbon */
.ribbon {
    display: flex;
    flex: none;
    height: 84px;
    border-bottom: 1px solid #d5d6d7;
    background: #f5f6f7;
    color: #333;
    font-size: 10px;
    line-height: 13px;
}
.group {
    display: flex;
    flex-direction: column;
    padding: 4px 4px 2px;
    border-right: 1px solid #dfe0e1;
}
.tools {
    display: flex;
    flex: 1;
    align-items: flex-start;
}
.tool {
    width: 37px;
    white-space: nowrap;
}
.roomy {
    padding-right: 2px;
    padding-left: 8px;
}
.roomy .tool {
    width: 39px;
}
.tool.spaced {
    margin-left: 8px;
}
.tool svg {
    width: 28px;
    height: 28px;
    margin: 1px auto 4px;
}
.tool .blue {
    color: #2ea3f2;
}
.tool .gray {
    color: #a2adba;
}
.tool.off {
    color: #999;
}
.drop {
    margin-left: 2px;
}
.drop.right {
    margin-left: 24px;
}
.caption {
    color: #555;
    text-align: center;
}
.gallery {
    display: flex;
    flex: none;
    height: 54px;
    margin-top: 2px;
    margin-bottom: 8px;
    overflow: hidden;
    background: #fff;
    border: 1px solid #e2e3e4;
}
.gallery-list {
    width: 36px;
}
.gallery-list button {
    display: block;
    padding: 2px 3px;
    border: 1px solid transparent;
}
.gallery-list .picked {
    border-color: #79b4e8;
    background: #cce4fa;
}
.gallery-list svg {
    width: 28px;
    height: 28px;
}
.gallery-list button + button svg {
    height: 14px;
}
.gallery-nav {
    display: flex;
    flex-direction: column;
    justify-content: space-around;
    width: 16px;
    background: #f5f6f7;
}
.gallery-nav svg {
    width: 6px;
    height: 6px;
    margin: 0 auto;
}

/* Search */
.searchbar {
    display: flex;
    flex: none;
    align-items: center;
    height: 28px;
    padding: 0 4px;
    background: #fff;
}
.search-box {
    display: flex;
    flex: 1;
    height: 23px;
    border: 1px solid #8a8a8a;
}
.search-box input {
    flex: 1;
    min-width: 0;
    padding: 0 4px 6px;
    border: none;
    outline: none;
    font: inherit;
    font-feature-settings: inherit;
}
.search-box input::placeholder {
    color: #777;
}
.search-box button {
    width: 36px;
    border: 1px solid #aaa;
    background: #ddd;
}
.search-box button svg {
    width: 20px;
    height: 18px;
    margin: 0 auto;
}
.help {
    display: flex;
    gap: 10px;
    margin-left: 11px;
    padding: 1px 4px;
    background: #f0f0f0;
}
.help button {
    width: 64px;
    height: 20px;
    border: 1px solid #adadad;
    background: #e1e1e1;
    font-size: 10px;
}

/* Main area */
.main {
    display: flex;
    flex: 1;
    min-height: 0;
}
.side {
    display: flex;
    flex-direction: column;
    flex: none;
    width: 254px;
    background: #cbd0d6;
}
.side-title {
    display: flex;
    align-items: center;
    justify-content: space-between;
    flex: none;
    height: 22px;
    margin: 0 0 2px 3px;
    padding: 0 3px 3px 5px;
    border-left: 2px dotted #222;
    background: linear-gradient(#f7f9fc, #d9dfe9);
    color: #1c4a94;
    font-size: 12px;
}
.side-title svg {
    width: 10px;
    height: 12px;
}
.side-body {
    display: flex;
    flex: 1;
    min-height: 0;
    padding-left: 2px;
    border-left: 3px solid #f0f0f0;
    border-bottom: 2px solid #e5e5e5;
}
.nav-panel {
    display: flex;
    flex-direction: column;
    flex: 1;
    min-width: 0;
    border: 2px solid #8e8e8e;
    border-top: 1px solid #fff;
    background: #f0f0f0;
}
.links {
    flex: none;
    padding: 2px 0 0;
    border-bottom: 1px solid #999;
}
.links p {
    display: flex;
    gap: 8px;
    margin: 0;
    line-height: 15px;
    white-space: nowrap;
}
.links a {
    color: #111;
    text-underline-offset: 1px;
}
.tree {
    display: flex;
    flex: 1;
    min-height: 0;
}
.tree-main {
    display: flex;
    flex-direction: column;
    flex: 1;
    min-width: 0;
}
.tree-head {
    display: flex;
    align-items: center;
    gap: 6px;
    flex: none;
    height: 21px;
    padding: 0 0 2px 5px;
    background: linear-gradient(#f5f5f5, #b8b8b8);
}
.tree-head svg {
    width: 8px;
    height: 8px;
}
.tree-list {
    flex: 1;
    min-height: 0;
    margin-left: 1px;
    padding: 0 1px;
    border: solid #777;
    border-width: 1px 0 0 1px;
    overflow: hidden;
}
.row {
    display: flex;
    align-items: center;
    gap: 3px;
    width: 100%;
    height: 15px;
    padding-left: 14px;
    border: 1px solid transparent;
    border-radius: 3px;
    font-weight: bold;
    line-height: 13px;
    white-space: nowrap;
}
.row svg {
    width: 8px;
    height: 8px;
    margin-left: -11px;
    color: #999;
}
.pink {
    border-color: #f9d9f9;
    background: linear-gradient(90deg, #ffe6ff, #f0f0f0 80%);
}
.red {
    border-color: #fbdada;
    background: linear-gradient(90deg, #ffe8e8, #f0f0f0 80%);
}
.row.blue {
    border-color: #d0d2fa;
    background: linear-gradient(90deg, #e6e8ff, #f0f0f0 80%);
}
.cyan {
    border-color: #d8f3f4;
    background: linear-gradient(90deg, #dcfcff, #f0f0f0 80%);
}
.green {
    background: linear-gradient(90deg, #e4fbe4, #f0f0f0 80%);
}
.yellow {
    border-color: #f7f5d2;
    background: linear-gradient(90deg, #fffee0, #f0f0f0 80%);
}
.branch {
    padding: 0 2px;
    border-style: solid;
    border-width: 0 1px;
}
.branch .row {
    padding-left: 11px;
}
.leaf {
    display: flex;
    align-items: center;
    gap: 2px;
    width: 100%;
    height: 19px;
    margin-bottom: 2px;
    padding-left: 5px;
    border: 1px solid #c8c8c8;
    background: #fff;
    white-space: nowrap;
}
.leaf svg {
    width: 13px;
    height: 13px;
}
.leaf.current {
    border-color: #bbb;
    background: #e4e4e4;
}
.side-tabs {
    display: flex;
    flex-direction: column;
    align-items: center;
    width: 26px;
    padding-left: 2px;
}
.side-tabs button {
    width: 20px;
    padding: 10px 0 5px;
    writing-mode: vertical-rl;
    line-height: 20px;
}
.side-tabs .active {
    padding: 5px 0;
    border: 1px solid #cdeefb;
    background: #fff;
}

/* Scroll bars */
.vscroll {
    display: flex;
    flex-direction: column;
    flex: none;
    width: 14px;
    background: #f0f0f0;
}
.vscroll button {
    height: 14px;
}
.hscroll {
    display: flex;
    flex: none;
    height: 16px;
    background: #f0f0f0;
}
.hscroll button {
    width: 14px;
}
.vscroll svg,
.hscroll svg {
    width: 8px;
    height: 8px;
    margin: 0 auto;
}
.track {
    flex: 1;
}
.thumb {
    background: #cdcdcd;
}
.nav-scroll .thumb {
    height: 45%;
}
.view-scroll .thumb {
    height: 29%;
    margin-top: 53px;
}
.thumb-scroll .thumb {
    height: 75%;
}
.hscroll .thumb {
    width: 41%;
    height: 13px;
    margin: 1px 0 0 23%;
}
.hscroll button:last-child {
    margin-right: 14px;
}

/* Toolbars */
.work {
    display: flex;
    flex-direction: column;
    flex: 1;
    min-width: 0;
}
.toolbar {
    display: flex;
    align-items: center;
    flex: none;
    height: 23px;
    border: 1px solid #b0b0b0;
    background: linear-gradient(#fcfcfc, #d4d4d4);
}
.toolbar button {
    width: 20px;
}
.toolbar svg {
    width: 16px;
    height: 16px;
    margin: 0 auto;
}
.toolbar i {
    width: 1px;
    height: 16px;
    margin: 0 3px;
    background: #8d8d8d;
}
.word text {
    fill: #11e;
    font: bold 6px "Liberation Mono", monospace;
}
.ab text {
    fill: #888;
    font: 7px "Liberation Sans", sans-serif;
}
.pp text {
    font: bold 13px "Liberation Sans", sans-serif;
}

/* 3D view */
.view {
    display: flex;
    flex-direction: column;
    flex: 9;
    min-height: 0;
}
.view-row {
    display: flex;
    flex: 1;
    min-height: 0;
}
.scene {
    flex: 1;
    min-width: 0;
    height: 100%;
    background: #000;
}
.scene text {
    font: 13px "Liberation Sans", sans-serif;
}

/* Docked panel */
.dock {
    display: flex;
    flex: 10;
    min-height: 0;
    padding-top: 3px;
    border-top: 1px solid #fff;
}
.grip {
    display: flex;
    flex-direction: column;
    align-items: center;
    gap: 4px;
    width: 16px;
}
.grip svg {
    width: 13px;
    height: 13px;
}
.dots {
    flex: 1;
    width: 6px;
    margin-bottom: 3px;
    background: radial-gradient(circle, #bbb 1px, transparent 1px) 0 0 / 3px 4px;
}
.dock-body {
    display: flex;
    flex-direction: column;
    flex: 1;
    min-width: 0;
}
.dock-tabs {
    height: 17px;
}
.dock-tab {
    display: inline-flex;
    align-items: center;
    gap: 8px;
    height: 18px;
    margin-left: 2px;
    padding: 0 2px;
    border: 1px solid #999;
    border-bottom: none;
    background: #f0f0f0;
    font-weight: bold;
}
.dock-tab svg {
    width: 10px;
    height: 10px;
}
.dock-frame {
    display: flex;
    flex-direction: column;
    flex: 1;
    min-height: 0;
    padding: 1px 2px 2px 3px;
    border: 1px solid #999;
}
.dock-frame .toolbar {
    height: 21px;
    border: none;
}
.thumbs-row {
    display: flex;
    flex: 1;
    min-height: 0;
    border: 1px solid #999;
    background: #fff;
}
.thumbs {
    display: grid;
    flex: 1;
    grid-template-columns: repeat(auto-fill, 143px);
    grid-auto-rows: 121px;
    min-width: 0;
    overflow: hidden;
}
.cell {
    display: grid;
    grid-template-columns: 126px 17px;
    grid-template-rows: 86px 15px;
    position: relative;
    font-size: 10px;
    line-height: 15px;
    text-align: center;
}
.cell span {
    grid-column: 1 / 3;
}
.shape {
    display: flex;
    align-items: center;
    justify-content: center;
}
.axes svg {
    width: 32px;
    height: 36px;
    margin-left: 7px;
}
.axes text {
    font: 11px "Liberation Sans", sans-serif;
}
.pier svg {
    width: 78px;
    height: 33px;
}
.box {
    width: 78px;
    height: 54px;
    border: 1px solid #333;
    background: #c0c0c0;
}
.box.flat {
    height: 15px;
}
.box.tall {
    width: 73px;
    height: 73px;
}
.link {
    width: 16px;
    height: 16px;
    margin: 2px 0 0 -4px;
}
/* Callout frame and mouse pointer over the thumbnails */
.marker {
    position: absolute;
    top: 8px;
    left: 5px;
    width: 113px;
    height: 106px;
    border: 3px solid #fb2b68;
    border-radius: 5px;
    box-shadow: 1px 2px 4px rgba(0, 0, 0, 0.35), inset 1px 2px 5px rgba(0, 0, 0, 0.35);
}
.cursor {
    position: absolute;
    top: 122px;
    left: 91px;
    width: 12px;
    height: 18px;
}

/* Status bar */
.status {
    display: flex;
    flex: none;
    height: 18px;
    border-top: 1px solid #ddd;
    font-size: 11px;
    line-height: 16px;
}
.status span {
    border-right: 1px solid #d0d0d0;
}
.status .mode {
    width: 224px;
    padding-left: 2px;
}
.status .coords {
    width: 218px;
    padding-left: 3px;
    font-size: 10px;
}
.status .blank {
    flex: 1;
}
.status .last {
    width: 145px;
    border: none;
}
```
